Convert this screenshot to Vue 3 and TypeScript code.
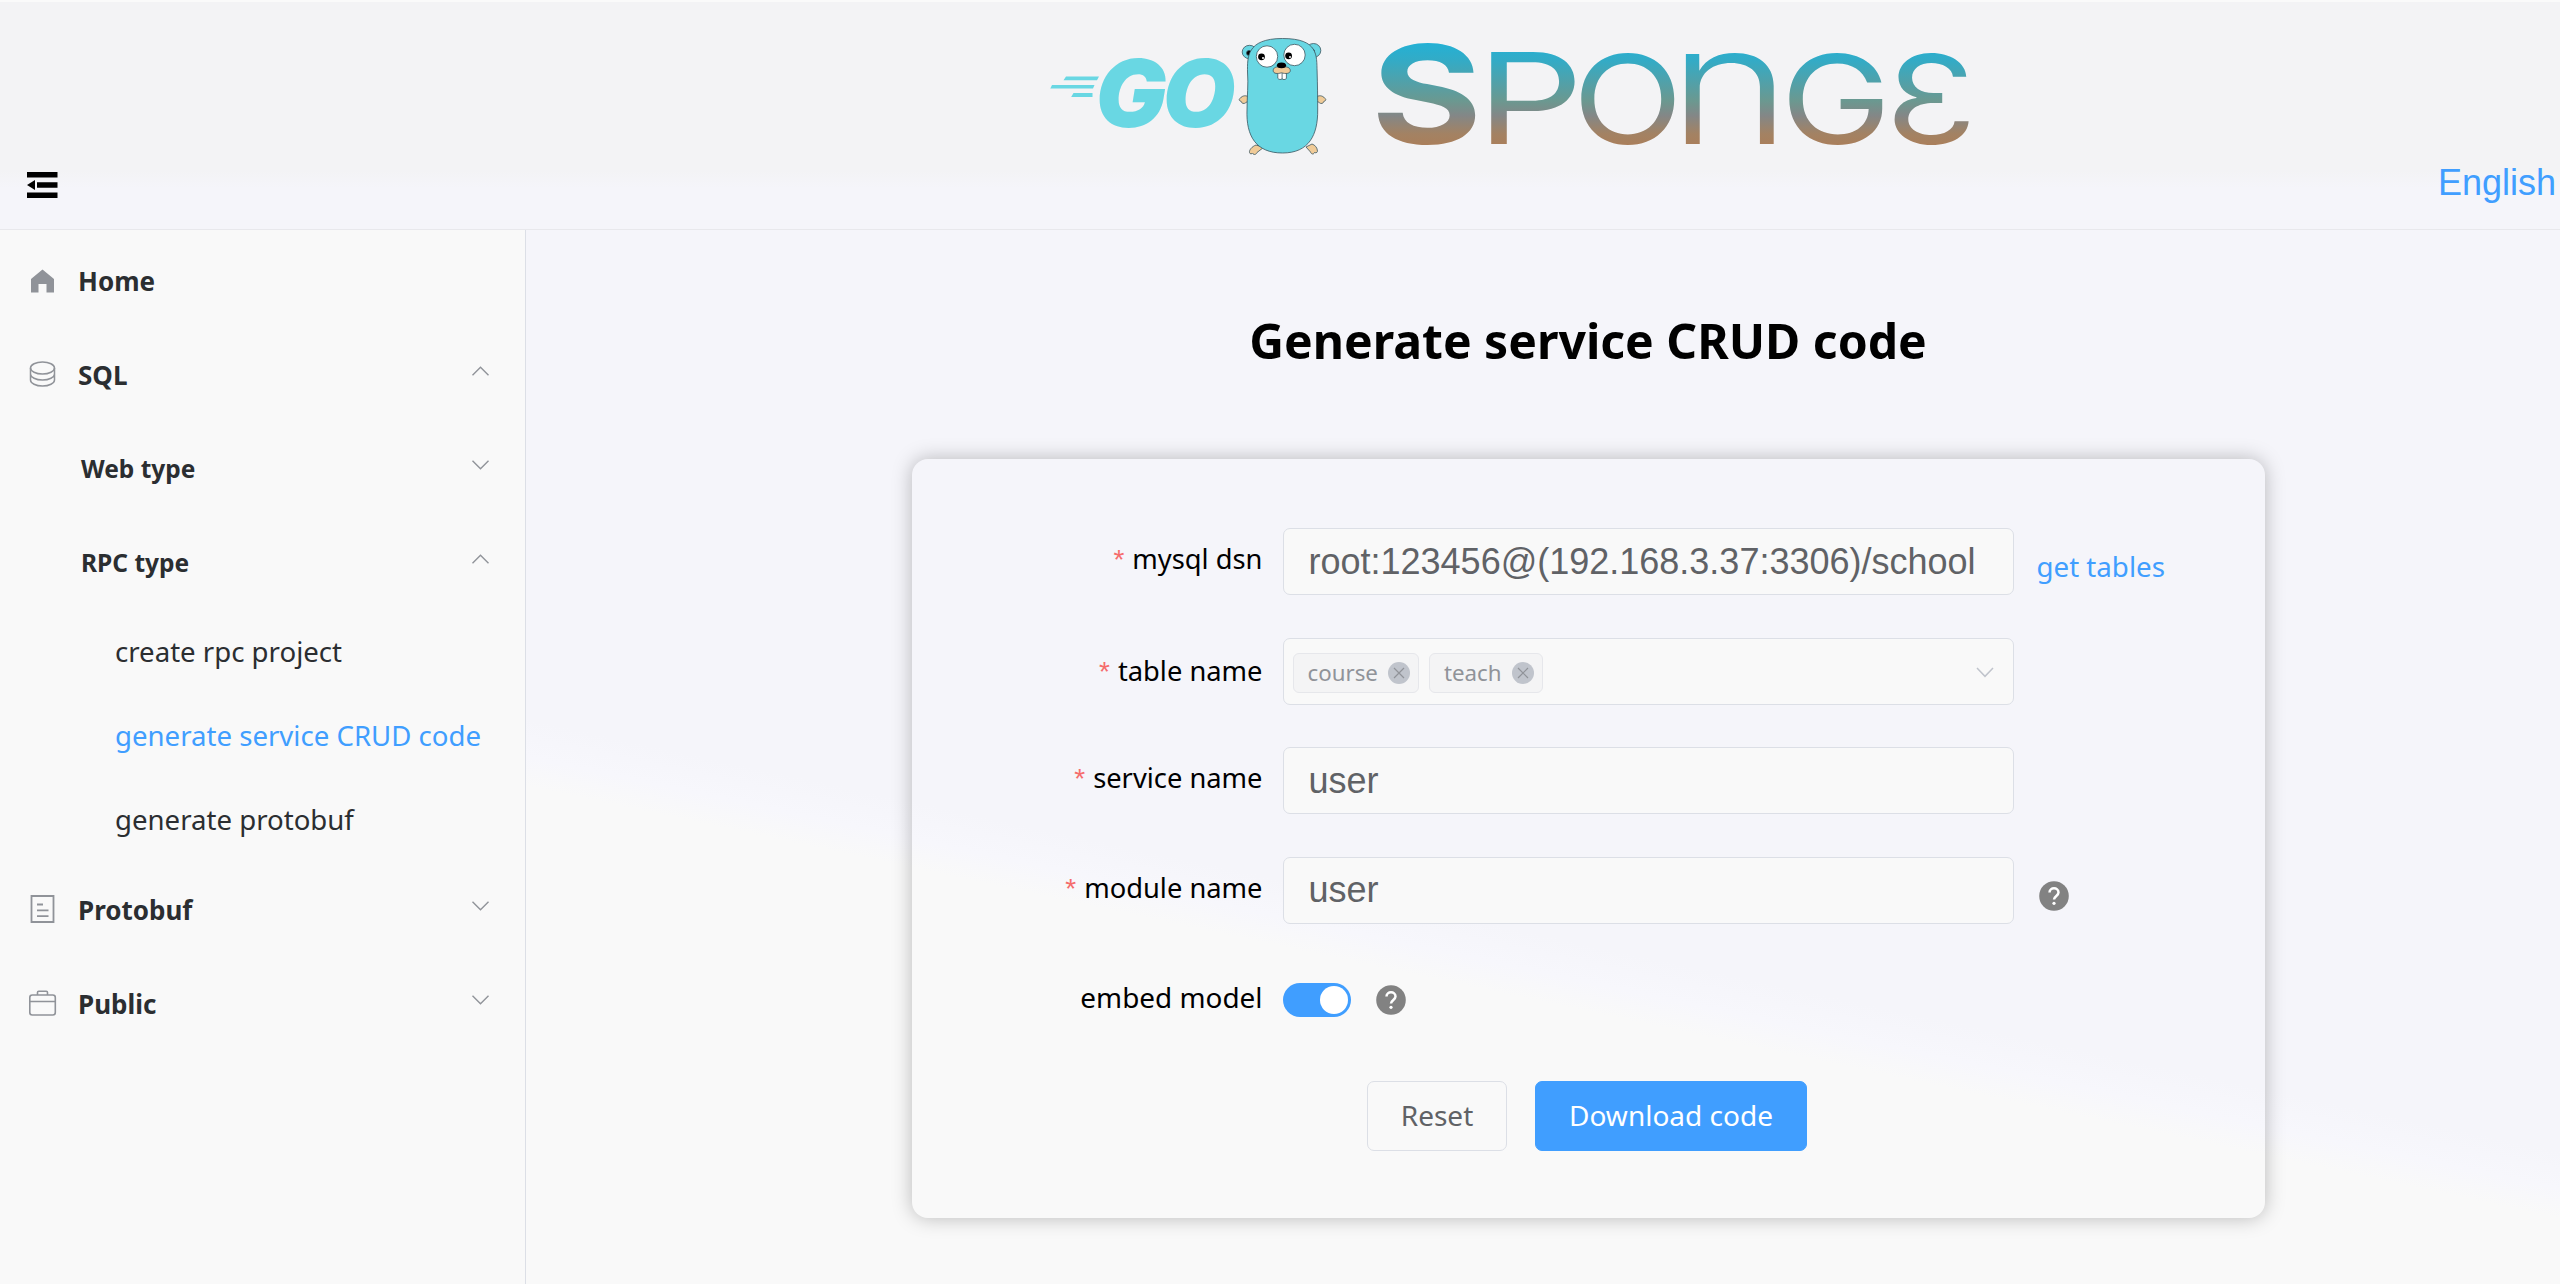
<script setup lang="ts">
import { ref } from 'vue'

interface Group { label: string; icon: string; open?: boolean; expandable: boolean }
interface Glyph { ch: string; x: number; size: number; weight: number; sx: number; sy: number; lsb: number }

const home: Group = { label: 'Home', icon: 'home', expandable: false }
const sql: Group = { label: 'SQL', icon: 'db', open: true, expandable: true }
const tail: Group[] = [
  { label: 'Protobuf', icon: 'doc', expandable: true },
  { label: 'Public', icon: 'bag', expandable: true },
]
const rpcPages = ['create rpc project', 'generate service CRUD code', 'generate protobuf']
const activePage = ref('generate service CRUD code')

const dsn = ref('root:123456@(192.168.3.37:3306)/school')
const tables = ref(['course', 'teach'])
const service = ref('user')
const moduleName = ref('user')

const wordmark: Glyph[] = [
  { ch: 'S', x: 18.5, size: 137, weight: 700, sx: 1.24, sy: 1, lsb: 6 },
  { ch: 'P', x: 131, size: 127, weight: 400, sx: 1.32, sy: 1, lsb: 11 },
  { ch: 'O', x: 221, size: 123, weight: 400, sx: 1.17, sy: 1, lsb: 7 },
  { ch: 'n', x: 325, size: 127, weight: 300, sx: 1.64, sy: 1.3, lsb: 10 },
  { ch: 'G', x: 429, size: 123, weight: 400, sx: 1.21, sy: 1, lsb: 7 },
  { ch: 'Ɛ', x: 533, size: 123, weight: 400, sx: 1.21, sy: 1, lsb: 6 },
]
</script>

<template>
  <div class="page">
    <header class="header">
      <svg class="toggle" width="32" height="28" viewBox="0 0 32 28">
        <path d="M1 1h30.500v5.500H1zM11 11.300h20.500v5.400H11zM1 21.500h30.500V27H1zM1 14l8-5v10z" fill="#000" />
      </svg>
      <div class="brand">
        <svg class="go" width="310" height="150" viewBox="0 0 310 150">
          <g fill="#69d7e3">
            <path d="M36 56.500h33l-2 3.700H33.500zM22 65h42.500l-1.500 3.500H20.300zM43.500 73h19v4H41.200z" />
            <text class="go-text" x="65.500" y="107">GO</text>
          </g>
          <g stroke="#3b5560" stroke-width="0.800">
            <g fill="#69d7e3">
              <ellipse cx="219.500" cy="32" rx="7.300" ry="6.700" />
              <ellipse cx="283.500" cy="30.500" rx="7.300" ry="7" />
            </g>
            <g fill="#000">
              <circle cx="219" cy="33" r="2.500" />
              <circle cx="282" cy="31.500" r="2.500" />
            </g>
            <g fill="#f0cb98">
              <path d="M218 76.500c-3-1.500-6-.5-7.500 1.500-2 1-1.500 3 .5 3.200.5 2.300 3 3 4.500 1.600l2.500-1.500zM287 76.500c3-1.500 6-.5 7.500 1.500 2 1 1.500 3-.5 3.200-.5 2.300-3 3-4.500 1.600L287 81z" />
              <path d="M226 125c-4 1.500-7 5-6.500 7.500.5 2 2.500 1.500 3 .5 1 2.500 4 1.500 4.500-.5l6.500-5zM276 127l4.500 5c.5 2 3 3 4 .5 2 1 3.500-.5 2.800-2.500-.3-2.500-2.300-5-5.300-6z" />
            </g>
            <path d="M217.500 52C217.500 38 216 18.500 252.500 18.500S286.500 36 287.100 51c.4 14 .6 26 .6 39 .2 25-8.700 43-35.200 43S216 116 217 90c0-13 1.500-26 .5-38z" fill="#69d7e3" />
            <circle cx="237" cy="36.500" r="10.700" fill="#fff" />
            <circle cx="264.500" cy="35" r="10.700" fill="#fff" />
            <path d="M247.800 50.500h8.600v8c-1.500 1.500-3.400 1.300-4.300.3-1 1-3.300 1-4.300-.5zM252.100 51v8" fill="#fff" />
            <path d="M251.500 47.500c-5-1.500-8.500 0-8.300 3.300.2 3 4.300 3.200 8.300 2 4 1.200 8.500 1 8.800-2 .2-3.300-3.800-4.800-8.800-3.300z" fill="#f0cb98" />
          </g>
          <ellipse cx="251.500" cy="45.300" rx="4.600" ry="2.900" />
          <circle cx="231.500" cy="36.800" r="3.400" />
          <circle cx="258.600" cy="35.800" r="3.400" />
          <circle cx="233" cy="38" r="1" fill="#fff" />
          <circle cx="260" cy="37" r="1" fill="#fff" />
        </svg>
        <svg class="sponge" width="640" height="150" viewBox="0 0 640 150" aria-label="SPONGE">
          <defs>
            <linearGradient v-for="(g, i) in wordmark" :id="'wm' + i" :key="i" gradientUnits="userSpaceOnUse" x1="0" x2="0" :y1="-102 / g.sy" y2="0">
              <stop offset="0" stop-color="#22b1d6" />
              <stop offset="0.18" stop-color="#33abc6" />
              <stop offset="0.58" stop-color="#6b9890" />
              <stop offset="0.72" stop-color="#838787" />
              <stop offset="0.9" stop-color="#a38263" />
              <stop offset="1" stop-color="#a97f5c" />
            </linearGradient>
          </defs>
          <text
            v-for="(g, i) in wordmark"
            :key="i"
            class="wm"
            :x="-g.lsb"
            y="0"
            :font-size="g.size"
            :font-weight="g.weight"
            :fill="`url(#wm${i})`"
            :transform="`translate(${g.x} 124) scale(${g.sx} ${g.sy})`"
          >{{ g.ch }}</text>
        </svg>
      </div>
      <a class="lang">English</a>
    </header>

    <div class="body">
      <aside class="side">
        <div v-for="g in [home, sql]" :key="g.label" class="item">
          <svg v-if="g.icon === 'home'" class="ico" width="32" height="32" viewBox="0 0 32 32">
            <path d="M15.500 4.500 27 14v13.500h-7.500V19h-8v8.500H4V14z" fill="#909399" />
          </svg>
          <svg v-else class="ico" width="32" height="32" viewBox="0 0 32 32" fill="none" stroke="#909399" stroke-width="1.500">
            <ellipse cx="15.500" cy="10" rx="12" ry="6" />
            <path d="M3.500 10v6c0 3.300 5.400 6 12 6s12-2.700 12-6v-6M3.500 16v6c0 3.300 5.400 6 12 6s12-2.700 12-6v-6" />
          </svg>
          <span>{{ g.label }}</span>
          <svg v-if="g.expandable" class="chev" width="17" height="10" viewBox="0 0 17 10"><path d="M.5 9.200l8-8 8 8" /></svg>
        </div>
        <div class="item nested">
          <span>Web type</span>
          <svg class="chev" width="17" height="10" viewBox="0 0 17 10"><path d="M.5.800l8 8 8-8" /></svg>
        </div>
        <div class="item nested">
          <span>RPC type</span>
          <svg class="chev" width="17" height="10" viewBox="0 0 17 10"><path d="M.5 9.200l8-8 8 8" /></svg>
        </div>
        <nav class="pages">
          <a v-for="p in rpcPages" :key="p" class="leaf" :class="{ on: p === activePage }">{{ p }}</a>
        </nav>
        <div v-for="g in tail" :key="g.label" class="item">
          <svg v-if="g.icon === 'doc'" class="ico" width="32" height="32" viewBox="0 0 32 32" fill="none" stroke="#909399" stroke-width="1.800">
            <path d="M4.500 3h22v26h-22zM10 11.500h6M10 17.300h11.500M10 23.200h11.500" />
          </svg>
          <svg v-else class="ico" width="32" height="32" viewBox="0 0 32 32" fill="none" stroke="#909399" stroke-width="1.600">
            <rect x="2.800" y="8" width="25.500" height="20" rx="2.500" />
            <path d="M3 14.500h25M10.500 8V5.500c0-1 .5-1.300 1.200-1.300h7.600c.7 0 1.200.3 1.200 1.300V8" />
          </svg>
          <span>{{ g.label }}</span>
          <svg class="chev" width="17" height="10" viewBox="0 0 17 10"><path d="M.5.800l8 8 8-8" /></svg>
        </div>
      </aside>

      <main class="main">
        <h1>Generate service CRUD code</h1>
        <form class="card" @submit.prevent>
          <div class="row">
            <label><i>*</i>mysql dsn</label>
            <div class="input">{{ dsn }}</div>
            <a class="link">get tables</a>
          </div>
          <div class="row">
            <label class="mid"><i>*</i>table name</label>
            <div class="input select">
              <span v-for="t in tables" :key="t" class="tag">
                {{ t }}
                <svg width="22" height="22" viewBox="0 0 22 22">
                  <circle cx="11" cy="11" r="11" fill="#c0c4cc" />
                  <path d="M6 6l10 10M16 6L6 16" stroke="#909399" stroke-width="1.200" />
                </svg>
              </span>
              <svg class="drop" width="18" height="11" viewBox="0 0 18 11"><path d="M1 1l8 8.300L17 1" fill="none" stroke="#c0c4cc" stroke-width="1.500" /></svg>
            </div>
          </div>
          <div class="row">
            <label><i>*</i>service name</label>
            <div class="input">{{ service }}</div>
          </div>
          <div class="row">
            <label><i>*</i>module name</label>
            <div class="input high">{{ moduleName }}</div>
            <svg class="help low" width="30" height="30" viewBox="0 0 30 30">
              <circle cx="15" cy="15" r="14.800" fill="#828282" />
              <path d="M10.500 11.600c0-5.800 9-5.800 9 0 0 3.300-4.500 3.500-4.500 7" fill="none" stroke="#fff" stroke-width="2.500" />
              <circle cx="15" cy="22.300" r="1.600" fill="#fff" />
            </svg>
          </div>
          <div class="row">
            <label class="embed">embed model</label>
            <div class="switch"><b></b></div>
            <svg class="help" width="30" height="30" viewBox="0 0 30 30">
              <circle cx="15" cy="15" r="14.800" fill="#828282" />
              <path d="M10.500 11.600c0-5.800 9-5.800 9 0 0 3.300-4.500 3.500-4.500 7" fill="none" stroke="#fff" stroke-width="2.500" />
              <circle cx="15" cy="22.300" r="1.600" fill="#fff" />
            </svg>
          </div>
          <div class="actions">
            <button type="reset" class="btn">Reset</button>
            <button type="submit" class="btn primary">Download code</button>
          </div>
        </form>
      </main>
    </div>
  </div>
</template>

<style>
html, body { margin: 0; overflow: hidden; }
</style>

<style scoped>
.page { width: 2560px; height: 1284px; display: flex; flex-direction: column; font-family: "Noto Sans", "Open Sans", sans-serif; color: #2b2e31; }
.page * { box-sizing: border-box; }
.header { height: 230px; flex: none; display: flex; border-top: 2px solid #fafafa; border-bottom: 1px solid #e8e8ec; background: linear-gradient(180deg, #f3f3f5 74%, #f5f5fa 82%); }
.toggle { margin: 169px 0 0 26px; flex: none; }
.brand { display: flex; margin-left: 972px; padding-top: 18px; gap: 20px; }
.brand svg { overflow: visible; flex: none; }
.go-text { font: italic 900 94px Inter, sans-serif; letter-spacing: -4px; }
.wm { font-family: Inter, sans-serif; }
.lang { margin: 160px 4px 0 auto; font: 36px/42px "Liberation Sans", Arial, sans-serif; color: #409eff; }

.body { flex: 1; display: flex; min-height: 0; }
.side { width: 526px; flex: none; padding-top: 4px; border-right: 1px solid #dcdfe6; background: #f9f9f9; }
.item { height: 93.670px; display: flex; align-items: center; padding: 0 36px 0 27px; font-size: 26px; font-weight: 700; }
.item span { margin-left: 19px; padding-top: 1px; }
.item.nested { padding-left: 81px; font-size: 24.500px; }
.item.nested span { margin-left: 0; }
.chev { margin: -6px 0 0 auto; fill: none; stroke: #909399; stroke-width: 1.400; }
.pages { padding: 0 0 2px; }
.leaf { display: flex; height: 84px; align-items: center; padding-left: 115px; font-size: 27.600px; }
.leaf.on { color: #409eff; }

.main { flex: 1; display: flex; flex-direction: column; align-items: center; padding-left: 90px; background: linear-gradient(192deg, #f5f5fa 62%, #f7f7fc 64.500%, #f9f9f9 66.500%); }
h1 { margin: 76px 0 0; font-size: 48.100px; line-height: 70px; font-weight: 700; color: #000; }
.card { width: 1353px; height: 759px; margin-top: 83px; padding-top: 69px; border-radius: 16px; box-shadow: 0 0 20px rgba(0, 0, 0, .26); display: flex; flex-direction: column; gap: 42.500px; }
.row { height: 67px; display: flex; align-items: center; }
label { width: 371px; padding: 0 20px 4px 0; text-align: right; font-size: 27.300px; line-height: 38px; color: #000; white-space: nowrap; }
label.mid { padding-bottom: 0; }
label.embed { padding-bottom: 6px; font-size: 27.900px; }
label i { margin-right: 8px; color: #f56c6c; font: 28px/38px "Liberation Sans", sans-serif; }
.input { width: 731px; height: 67px; padding-left: 25px; border: 1px solid #dcdfe6; border-radius: 7px; background: #f9f9f9; color: #606266; font: 36px/66px "Liberation Sans", Arial, sans-serif; }
.input.high { line-height: 64px; }
.select { display: flex; align-items: center; gap: 10px; padding: 3px 19px 0 9px; }
.tag { display: flex; align-items: center; gap: 10px; height: 40px; padding: 0 8px 0 14px; border: 1px solid #e6e7eb; border-radius: 6px; background: #f4f4f5; color: #909399; font: 22.300px/38px "Noto Sans", sans-serif; }
.drop { margin-left: auto; }
.link { margin: 9px 0 0 23px; font-size: 27.700px; color: #409eff; }
.help { margin-left: 25px; }
.help.low { margin-top: 11px; }
.switch { width: 68px; height: 34px; padding: 3px; border-radius: 17px; background: #409eff; display: flex; justify-content: flex-end; }
.switch b { width: 28px; height: 28px; border-radius: 50%; background: #fff; }
.actions { display: flex; justify-content: center; gap: 28px; margin: 5px 2px 0 0; }
.btn { height: 70px; padding: 0 0 1px; width: 140px; border: 1px solid #dcdfe6; border-radius: 7px; background: #f9f9f9; color: #606266; font: 28px "Noto Sans", sans-serif; }
.btn.primary { width: 272px; border-color: #409eff; background: #409eff; color: #fff; }
</style>
